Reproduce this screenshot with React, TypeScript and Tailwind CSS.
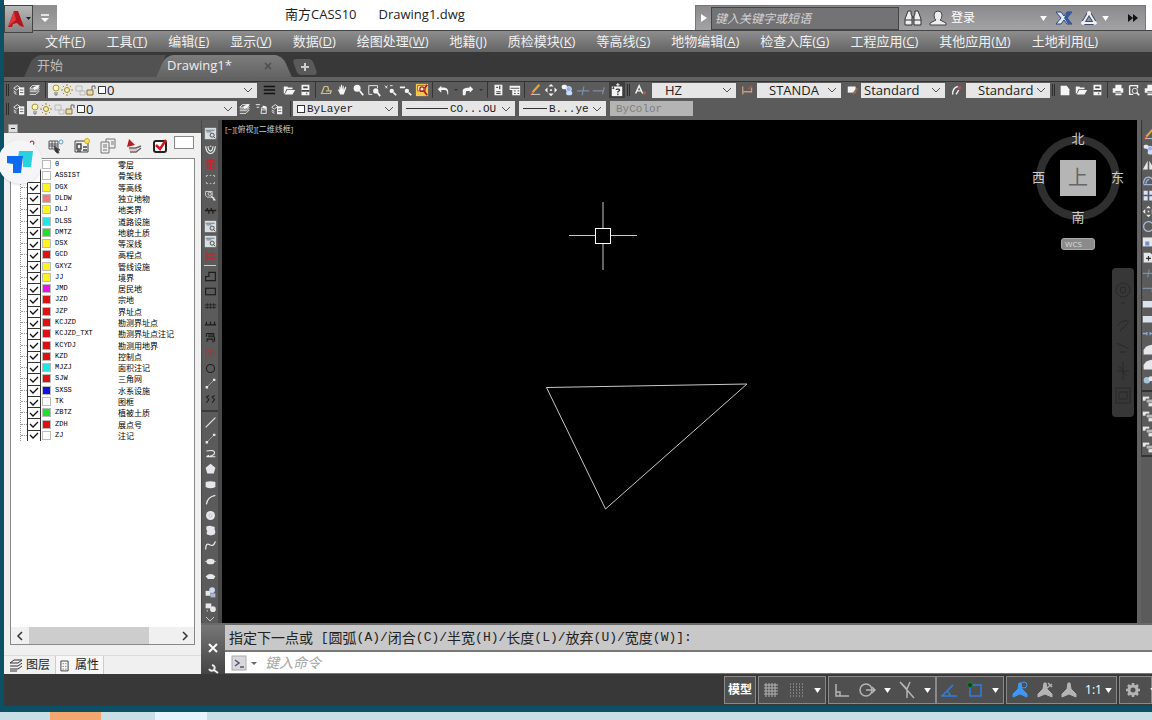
import React, { useState } from 'react'

const f = { fill: 'currentColor', stroke: 'none' }

/* 16x16 tool glyphs */
const glyphs: Record<string, React.ReactNode> = {
  layerProps: <><path d="M2 6l4-3 3 2-4 3zM2 9l3 2M2 11l3 2" /><rect x="8" y="5" width="6" height="9" {...f} /><path d="M9 8h4M9 11h4" stroke="#555" /></>,
  layerStack: <><path d="M5 3h8l-3 3H2zM2 8l8 0 3-3M2 10h8l3-3M2 13h7l4-4" /><path d="M6 5l6-3v4l-5 2z" {...f} /></>,
  layerIso: <><path d="M2 3h5M3 6h3M9 6h5v7H8zM9 9h5" /><path d="M10 4l4 1v3l-4-1z" {...f} /></>,
  lines: <path d="M2 4h13M2 8h13M2 12h13" stroke="#111" strokeWidth="1.5" />,
  folder: <><path d="M2 4h4l1 1h5v2H5l-2 5H2z" {...f} /><path d="M6 8h9l-3 5H3z" {...f} /></>,
  save: <><path d="M4 2h9v12H4z" {...f} /><path d="M6 5h5M4 9h9" stroke="#444" strokeWidth="2" /><path d="M10 11v2" stroke="#444" /></>,
  sheet: <path d="M6 4h4l1 4M3 12l3-8M2 12h11l1-3H8" stroke="#cfc08a" strokeWidth="1.4" />,
  hand: <path d="M3 7l2 1V4h1v3l1-5h1v5l1-4h1v5l2-4 1 1-3 8H6z" {...f} />,
  zoom: <><circle cx="7" cy="6" r="4" {...f} /><path d="M10 9l4 5" strokeWidth="2" /></>,
  zoomWin: <><path d="M2 3h10v3M2 3v10h4" /><circle cx="10" cy="9" r="3" {...f} /><path d="M12 11l3 4" strokeWidth="2" /></>,
  zoomPrev: <><path d="M2 3l3 3M5 3L3 6M8 3h3" /><circle cx="10" cy="9" r="2.5" {...f} /><path d="M12 11l3 3" strokeWidth="2" /></>,
  zoomOut: <><path d="M1 5h6" strokeWidth="2" /><circle cx="9" cy="9" r="2.5" {...f} /><path d="M11 11l3 3" strokeWidth="2" /></>,
  inspect: <><rect x="1" y="1" width="14" height="14" fill="#f0c850" stroke="none" /><path d="M3 3h9v6H3z" fill="#fff3c4" stroke="#c9402c" /><circle cx="8" cy="7" r="2.5" stroke="#b1201c" strokeWidth="1.5" /><path d="M10 9l4 5M14 2l-3 4" stroke="#b1201c" strokeWidth="2" /></>,
  undo: <path d="M6 3L2 7l4 4V8h4q3 0 3 5h1q1-8-5-8H6z" {...f} />,
  redo: <path d="M10 3l4 4-4 4V9H6l-1 5H2V8q1-3 8-3z" {...f} />,
  calc: <><path d="M4 2h9v12H4z" {...f} /><path d="M6 5h2M10 3v4M6 10h5M6 12h5" stroke="#444" strokeWidth="1.4" /></>,
  table: <><path d="M3 3h12v11H6V8H3z" {...f} /><path d="M4 6h10M8 9h2M12 9h2M8 12h2M12 12h2" stroke="#444" /></>,
  pencil: <><path d="M3 13h11" stroke="#ddd" /><path d="M4 12l9-10" stroke="#dfa94a" strokeWidth="2.4" /><path d="M2 13l3-3" stroke="#b1403c" strokeWidth="2" /></>,
  move: <><path d="M8 1l3 3H5zM8 15l3-3H5zM1 8l3-3v6zM15 8l-3-3v6z" {...f} /><path d="M7 8h2" strokeWidth="2" /></>,
  copy: <><rect x="2" y="2" width="6" height="5" rx="2" {...f} /><circle cx="10" cy="7" r="3" fill="#8fb4ea" stroke="#dfe9ff" /><rect x="7" y="9" width="7" height="5" rx="2" fill="#c9dcfa" stroke="none" /></>,
  trim: <path d="M1 9h14M9 4L7 14" stroke="#7e8fa3" strokeWidth="1.4" />,
  extend: <path d="M1 9h12M14 5l-2 8" stroke="#7e8fa3" strokeWidth="1.4" />,
  help: <><path d="M2 4h12v11H2z" {...f} /><path d="M9 0v4M7 2h4" stroke="#fff" /><path d="M4 4v3M2 6h3" stroke="#444" /><path d="M7 8q0-1 2-1t2 1-2 2v1M9 12v2" stroke="#333" strokeWidth="1.4" /></>,
  textA: <><path d="M3 12L7 3l4 9M5 9h5" strokeWidth="1.6" /><path d="M11 10l2 4 2-4" fill="#b0694c" stroke="none" /></>,
  dim: <><path d="M2 4v9M2 10h10M12 5v6" stroke="#c69a82" strokeWidth="1.5" /><path d="M8 7l5-4" stroke="#a05c40" strokeWidth="2" /></>,
  tableStyle: <><path d="M2 4h9v7H2z" {...f} /><path d="M8 13l5-7" stroke="#9a6a4c" strokeWidth="2.4" /></>,
  leader: <><path d="M3 13q0-8 6-9M7 13l3-5" strokeWidth="1.6" /><circle cx="11" cy="5" r="2" fill="#a55" stroke="none" /></>,
  newDoc: <path d="M3 3h7l3 4v7H3z" {...f} />,
  printer: <><path d="M5 2h7v4H5zM2 6h12v5H2zM5 12h7v2H5z" {...f} /><path d="M5 10h6" stroke="#444" /></>,
  preview: <><path d="M3 3h9v3M3 3v10h4" strokeWidth="1.6" /><circle cx="9" cy="9" r="3" /><path d="M11 11l3 3" strokeWidth="2" /></>,
  viewBox: <><rect x="1" y="1" width="14" height="14" fill="#d8dde0" stroke="none" /><path d="M2 4h11M3 6h6" stroke="#567" /><circle cx="10" cy="10" r="2.5" stroke="#333" /><path d="M12 12l2 2" stroke="#333" /></>,
  tulip: <path d="M2 4q1 9 6 9t6-9M5 4q0 5 3 6 3-1 3-6M7 4h2" strokeWidth="1.5" />,
  redMark: <path d="M4 3h8v9H4zM8 1v13M3 7h10" stroke="#d81f26" strokeWidth="1.6" />,
  dashes: <path d="M3 5V3h2M11 3h2v2M3 11v2h2M11 13h2v-2M7 3h2M7 13h2" stroke="#ccc" />,
  search2: <><path d="M2 3h8v7H4L2 8z" /><circle cx="7" cy="6" r="2" /><path d="M9 9l5 5M12 10v4" strokeWidth="1.5" /></>,
  fence: <path d="M1 8h14M4 5v2M9 5v2M6 9v3M11 9v3" stroke="#1d1d1d" strokeWidth="1.6" />,
  redGrid: <path d="M4 2v12M9 3v11M2 5h12M2 10h12" stroke="#d81f26" strokeWidth="1.2" />,
  steps: <path d="M2 13V8h4V3h8v10z" stroke="#1d1d1d" strokeWidth="1.4" />,
  rect: <rect x="2" y="4" width="12" height="8" stroke="#1d1d1d" strokeWidth="1.4" />,
  rails: <path d="M1 6h14M1 9h14M4 4v3M8 4v3M12 4v3M4 8v3M8 8v3M12 8v3" stroke="#1d1d1d" />,
  comb: <path d="M1 11h14M3 7v4M8 7v4M13 7v4" stroke="#1d1d1d" strokeWidth="1.5" />,
  horse: <path d="M3 3h9v4H5M3 3v4M3 10h8v4M13 7v6M5 5h6M3 13l2-2" stroke="#1d1d1d" strokeWidth="1.3" />,
  redTwo: <path d="M4 3v10M4 4h3v8M9 3v10M9 3h3v9M4 8h8" stroke="#d81f26" strokeWidth="1.1" />,
  ring: <circle cx="8" cy="8" r="5" stroke="#1d1d1d" strokeWidth="1.3" />,
  twoPts: <><path d="M4 12l8-8" stroke="#aaa" /><path d="M2 11h3v3H2zM11 2h3v3h-3z" {...f} /></>,
  ss: <path d="M6 3L3 5l3 3-3 4M13 3l-3 2 3 3-3 4" stroke="#1d1d1d" strokeWidth="1.3" />,
  line: <path d="M2 14L14 2" strokeWidth="1.5" />,
  pline: <path d="M3 5q10-2 10 2t-10 5h11M3 12l3-2" strokeWidth="1.4" />,
  pentagon: <path d="M8 2l6 5-2 7H4L2 7z" {...f} />,
  box: <path d="M2 5q6-2 12 0v6q-6 3-12 0z" {...f} />,
  arc: <path d="M3 14Q4 5 14 3" strokeWidth="1.5" />,
  disc: <><circle cx="8" cy="8" r="5.5" {...f} /><circle cx="8" cy="8" r="2" stroke="#bbb" /></>,
  cloud: <path d="M3 3q4-2 8 0 3 0 2 3 2 4 0 7-5 2-9 0-2-2 0-4-2-3-1-6z" {...f} />,
  spline: <path d="M2 13Q2 4 7 7t7-4" strokeWidth="1.6" />,
  ellipse: <><path d="M1 8h14" stroke="#a9b8d8" /><ellipse cx="8" cy="8" rx="5" ry="3.5" {...f} /></>,
  ellArc: <path d="M2 8q6-6 12 0l-2 3H5z" {...f} />,
  block: <><path d="M2 6h6v6H2z" {...f} /><circle cx="10" cy="5" r="3.5" fill="#cfd9f2" stroke="none" /><path d="M8 9h6v5H8z" fill="#a9b8d8" stroke="none" /></>,
  makeBlock: <><path d="M2 3h7v6H2z" {...f} /><circle cx="11" cy="10" r="3.5" {...f} /><path d="M4 11v2" /></>,
  mirror: <path d="M7 2v11H1zM9 2v11h6z" {...f} />,
  offset: <path d="M2 12q0-8 6-8t6 8M5 12q0-5 4-5M2 13h12" stroke="#9fb3d8" strokeWidth="1.6" />,
  array: <path d="M2 2h5v5H2zM9 2h5v5H9zM2 9h5v5H2zM9 9h5v5H9z" fill="#d6e3fb" stroke="none" />,
  rotate: <circle cx="8" cy="8" r="6" stroke="#a9bedd" strokeWidth="1.5" />,
  scale: <><path d="M1 3h14v11H1z" {...f} /><path d="M4 8h5v5H4z" fill="#6e93cf" stroke="none" /></>,
  stretch: <><path d="M2 2h8l4 4v8H2z" {...f} /><path d="M5 9h6M8 6v6" stroke="#333" strokeWidth="1.5" /></>,
  breakPt: <path d="M1 5h14v8H1zM3 2v3" fill="#dbe2ee" stroke="none" />,
  join: <path d="M1 8h5M10 8h5M6 6v4M10 6v4" stroke="#8ea9da" strokeWidth="1.6" />,
  fillet: <path d="M2 14V9q2-6 10-7h3v12z" {...f} />,
  explode: <><circle cx="6" cy="9" r="4" fill="#a7c4d8" stroke="none" /><circle cx="11" cy="7" r="3" fill="#dcebf4" stroke="none" /></>,
  order: <><path d="M1 2h8v5H1z" {...f} /><path d="M5 5h8v5H5z" fill="#b6b6b6" stroke="#444" /><path d="M8 10h7v4H8z" {...f} /></>,
}

const Ico = ({ g, className = 'size-[14px]' }: { g: string; className?: string }) => (
  <svg viewBox="0 0 16 16" fill="none" stroke="currentColor" className={`${className} shrink-0`} aria-hidden="true">
    {glyphs[g]}
  </svg>
)

const Tool = ({ g }: { g: string }) => (
  <button type="button" aria-label={g} className="flex h-4 w-4 shrink-0 items-center justify-center text-gray-100">
    <Ico g={g} />
  </button>
)

const Tools = ({ list }: { list: string[] }) => (
  <div className="flex shrink-0">
    {list.map((g, i) => <Tool key={i} g={g} />)}
  </div>
)

const Sep = () => <span className="mx-[2px] h-4 w-px shrink-0 bg-[#353535]" />

const Grip = () => <span className="mx-[2px] h-3 w-[3px] shrink-0 border-x border-[#2e2e2e]" />

const Chevron = () => (
  <svg viewBox="0 0 10 10" className="mr-1 size-[10px] shrink-0" fill="none" stroke="#555" aria-hidden="true">
    <path d="M1 3l4 4 4-4" />
  </svg>
)

const Dot = () => (
  <svg viewBox="0 0 9 16" className="w-[9px] shrink-0" aria-hidden="true"><path d="M3 7h4L5 9z" fill="#333" /></svg>
)

const Combo = ({ label, value, width, children, text = 'text-[13px]' }: {
  label: string; value: string; width: string; children?: React.ReactNode; text?: string
}) => (
  <div className={`${width} flex h-[15px] shrink-0 items-center bg-[#e6e6e6] text-[#222]`}>
    {children}
    <select aria-label={label} className={`${text} h-full min-w-0 flex-1 appearance-none bg-transparent leading-[14px] outline-none`}>
      <option>{value}</option>
    </select>
    <Chevron />
  </div>
)

const LayerState = () => (
  <svg viewBox="0 0 56 14" className="ml-[3px] h-[14px] w-[56px] shrink-0" fill="none" aria-hidden="true">
    <circle cx="5" cy="5" r="3" fill="#fbf6b8" stroke="#a59b3a" /><path d="M4 9v3h2V9" stroke="#777" />
    <circle cx="16" cy="7" r="2.5" fill="#f7efb0" stroke="#a08c26" /><path d="M16 1v2M16 11v2M10 7h2M20 7h2M12 3l1 1M20 3l-1 1M12 11l1-1M20 11l-1-1" stroke="#a08c26" />
    <path d="M25 3h6v5h-6zM29 8h5v4h-5z" stroke="#bbb" />
    <path d="M36 7h6v5h-6z" fill="#e8dcae" stroke="#8a7340" /><path d="M41 7V3h3v3" stroke="#666" />
    <path d="M47.500 3.500h7v7h-7z" fill="#fff" stroke="#333" />
  </svg>
)

const menus = [
  ['文件', 'F'], ['工具', 'T'], ['编辑', 'E'], ['显示', 'V'], ['数据', 'D'], ['绘图处理', 'W'], ['地籍', 'J'],
  ['质检模块', 'K'], ['等高线', 'S'], ['地物编辑', 'A'], ['检查入库', 'G'], ['工程应用', 'C'], ['其他应用', 'M'], ['土地利用', 'L'],
]

const layers: [string, string, string][] = [
  ['0', '零层', '#ffffff'], ['ASSIST', '骨架线', '#ffffff'], ['DGX', '等高线', '#fdf51d'], ['DLDW', '独立地物', '#ec7c7c'],
  ['DLJ', '地类界', '#fdf51d'], ['DLSS', '道路设施', '#21e6e6'], ['DMTZ', '地貌土质', '#1fe02a'], ['DSX', '等深线', '#fdf51d'],
  ['GCD', '高程点', '#dd1111'], ['GXYZ', '管线设施', '#fdf51d'], ['JJ', '境界', '#fdf51d'], ['JMD', '居民地', '#e815e8'],
  ['JZD', '宗地', '#dd1111'], ['JZP', '界址点', '#dd1111'], ['KCJZD', '勘测界址点', '#dd1111'], ['KCJZD_TXT', '勘测界址点注记', '#dd1111'],
  ['KCYDJ', '勘测用地界', '#dd1111'], ['KZD', '控制点', '#dd1111'], ['MJZJ', '面积注记', '#21e6e6'], ['SJW', '三角网', '#dd1111'],
  ['SXSS', '水系设施', '#1212d8'], ['TK', '图框', '#ffffff'], ['ZBTZ', '植被土质', '#1fe02a'], ['ZDH', '展点号', '#dd1111'], ['ZJ', '注记', '#ffffff'],
]

const options = [['圆弧', 'A'], ['闭合', 'C'], ['半宽', 'H'], ['长度', 'L'], ['放弃', 'U'], ['宽度', 'W']]

const leftTop = ['viewBox', 'tulip', 'redMark', 'dashes', 'search2', 'fence', 'viewBox', 'viewBox', 'redGrid']
const leftMid = ['steps', 'rect', 'rails', 'comb', 'horse', 'redTwo', 'ring', 'twoPts', 'ss']
const leftLow = ['line', 'twoPts', 'pline', 'pentagon', 'box', 'arc', 'disc', 'cloud', 'spline', 'ellipse', 'ellArc', 'block', 'makeBlock']
const rightTop = ['pencil', 'copy', 'mirror', 'offset', 'array', 'move', 'rotate', 'scale', 'stretch', 'trim', 'extend', 'breakPt', 'breakPt', 'join', 'fillet', 'fillet', 'explode']

const TitleBar = () => (
  <header className="flex h-[30px] shrink-0 items-end bg-white">
    <div className="z-10 flex h-[25px] items-start">
      <button type="button" aria-label="应用程序菜单" className="flex h-[28px] w-[29px] items-center justify-center border border-[#444] bg-linear-to-b from-[#b8b8b8] to-[#858585]">
        <svg viewBox="0 0 26 24" className="h-6 w-[26px]" aria-hidden="true">
          <path d="M2 20L8 4h4l6 16-4-1-3-3-4 1-1 3z" fill="#b3161c" />
          <path d="M8 4l2 9-4 3-4 4z" fill="#e2383d" />
          <path d="M20 10h5l-2.500 3z" fill="#222" />
        </svg>
      </button>
      <button type="button" aria-label="快速访问" className="flex h-[25px] w-[24px] items-center justify-center bg-linear-to-b from-[#8c8c8c] to-[#a2a2a2]">
        <svg viewBox="0 0 10 8" className="h-2 w-[10px]" aria-hidden="true"><path d="M1 1h8" stroke="#fff" strokeWidth="1.5" /><path d="M1 4h8L5 8z" fill="#fff" /></svg>
      </button>
    </div>
    <h1 className="ml-[228px] flex h-[30px] flex-1 items-center gap-[22px] text-[13px] text-[#222]">
      <span>南方CASS10</span>
      <span>Drawing1.dwg</span>
    </h1>
    <div className="mr-[6px] flex h-[25px] w-[451px] items-center border border-b-0 border-[#777] bg-linear-to-b from-[#8b8b8e] to-[#a3a3a6] text-white">
      <button type="button" aria-label="展开" className="flex w-[15px] justify-center">
        <svg viewBox="0 0 6 8" className="h-2 w-[6px]" aria-hidden="true"><path d="M0 0l6 4-6 4z" fill="#fff" /></svg>
      </button>
      <input aria-label="搜索" placeholder="键入关键字或短语" className="h-[23px] w-[188px] border border-[#444] bg-[#737376] px-[3px] text-[12px] italic outline-none placeholder:text-[#d5d5d5]" />
      <button type="button" aria-label="查找" className="ml-[5px]">
        <svg viewBox="0 0 18 18" className="size-[18px]" fill="#eee" stroke="#333" aria-hidden="true">
          <path d="M4 2h3v3l1 2v9H1v-6zM14 2h-3v3l-1 2v9h7v-6z" /><path d="M1 11h7M10 11h7M8 8h2" />
        </svg>
      </button>
      <button type="button" className="ml-[7px] flex items-center gap-[4px] text-[12px]">
        <svg viewBox="0 0 18 18" className="size-[18px]" fill="#eee" stroke="#444" aria-hidden="true">
          <path d="M9 2q4 0 4 4t-2 5l6 3v2H1v-2l6-3Q5 10 5 6t4-4z" />
        </svg>
        登录
      </button>
      <span className="flex-1" />
      <Down />
      <svg viewBox="0 0 18 16" className="ml-2 h-4 w-[18px]" aria-label="Exchange">
        <path d="M1 2h5l3 4 3-4h5l-5 6 5 6h-5l-3-4-3 4H1l5-6z" fill="#e3e8f2" stroke="#2b477e" /><path d="M12 2h5l-5 6 5 6h-4l-4-6z" fill="#3558a0" />
      </svg>
      <svg viewBox="0 0 18 16" className="mr-1 ml-[7px] h-4 w-[18px]" fill="none" aria-label="A360">
        <path d="M9 3L3 13h12z" stroke="#3a4b70" strokeWidth="4" strokeLinejoin="round" /><path d="M9 3L3 13h12z" stroke="#f2f2f2" strokeWidth="2" />
        <g fill="#f2f2f2"><circle cx="9" cy="3" r="2" /><circle cx="3" cy="13" r="2" /><circle cx="15" cy="13" r="2" /></g>
      </svg>
      <Down />
      <svg viewBox="0 0 10 8" className="mr-[7px] ml-[19px] h-2 w-[10px]" fill="#111" aria-hidden="true"><path d="M0 0l5 4-5 4zM5 0l5 4-5 4z" /></svg>
    </div>
  </header>
)

const Down = () => (
  <svg viewBox="0 0 8 6" className="h-[5px] w-[7px] shrink-0" aria-hidden="true"><path d="M0 0h8L4 6z" fill="#fff" /></svg>
)

const Tabs = () => (
  <div className="flex h-[29px] shrink-0 items-start border-b-4 border-[#626262] bg-[#383838] pt-[3px] pl-[25px] text-[13px]">
    <button type="button" className="relative flex h-[22px] w-[132px] items-center pl-[8px] text-[#bdbdbd]">
      <span className="absolute inset-0 -skew-x-[24deg] rounded-tl-lg bg-[#525252]" />
      <span className="relative">开始</span>
    </button>
    <div className="relative flex h-[22px] w-[126px] items-center justify-between pr-[15px] pl-[6px] text-[#eee]">
      <span className="absolute inset-y-0 right-4 left-0 -skew-x-[24deg] rounded-tl-lg bg-linear-to-b from-[#7d7d7d] to-[#646464]" />
      <span className="absolute inset-y-0 right-0 left-8 skew-x-[24deg] rounded-tr-lg bg-linear-to-b from-[#7d7d7d] to-[#646464]" />
      <a href="#drawing" className="relative">Drawing1*</a>
      <button type="button" aria-label="关闭" className="relative">
        <svg viewBox="0 0 8 8" className="size-2" stroke="#4c4c4c" strokeWidth="1.5" aria-hidden="true"><path d="M1 1l6 6M7 1L1 7" /></svg>
      </button>
    </div>
    <button type="button" aria-label="新图形" className="relative mt-[4px] ml-[8px] flex h-[16px] w-[20px] items-center justify-center">
      <span className="absolute inset-0 skew-x-[20deg] rounded bg-[#5a5a5a]" />
      <svg viewBox="0 0 10 10" className="relative size-[10px]" stroke="#ccc" strokeWidth="2" aria-hidden="true"><path d="M5 1v8M1 5h8" /></svg>
    </button>
  </div>
)

const Toolbars = () => (
  <div className="flex h-[39px] shrink-0 flex-col justify-between overflow-hidden bg-[#5b5b5b] pb-[3px]">
    <div className="flex h-[17px] items-center border-t border-[#333]">
      <Grip />
      <Tools list={['layerProps', 'layerStack']} />
      <Sep />
      <Combo label="图层" value="0" width="w-[209px]"><LayerState /></Combo>
      <span className="w-1 shrink-0" />
      <Tools list={['lines']} />
      <span className="w-1 shrink-0" />
      <Tools list={['folder', 'save']} />
      <Sep />
      <Tools list={['sheet', 'hand', 'zoom', 'zoomWin', 'zoomPrev', 'zoomOut', 'inspect']} />
      <Sep />
      <Tool g="undo" />
      <Dot />
      <Tool g="redo" />
      <Dot />
      <Sep />
      <Tools list={['calc', 'table']} />
      <Sep />
      <Tools list={['pencil', 'move', 'copy', 'trim', 'extend']} />
      <span className="ml-[2px] shrink-0 bg-[#3e3e3e]"><Tool g="help" /></span>
      <Grip />
      <Tools list={['textA']} />
      <span className="w-1 shrink-0" />
      <Combo label="文字样式" value="HZ" width="w-[84px] pl-[13px]" />
      <span className="w-1 shrink-0" />
      <Tools list={['dim']} />
      <span className="w-px shrink-0" />
      <Combo label="标注样式" value="STANDA" width="w-[84px] pl-[12px]" />
      <span className="w-1 shrink-0" />
      <Tools list={['tableStyle']} />
      <Combo label="表格样式" value="Standard" width="w-[84px] pl-[3px]" />
      <span className="w-1 shrink-0" />
      <Tools list={['leader']} />
      <span className="w-px shrink-0" />
      <Combo label="引线样式" value="Standard" width="w-[84px] pl-[12px]" />
      <Grip />
      <Tools list={['newDoc', 'folder', 'save']} />
      <Sep />
      <Tools list={['printer', 'preview', 'printer']} />
    </div>
    <div className="flex h-[17px] items-center">
      <Grip />
      <Tools list={['layerProps']} />
      <Combo label="当前图层" value="0" width="w-[210px]"><LayerState /></Combo>
      <Tools list={['layerStack', 'layerIso', 'layerProps']} />
      <span className="w-[3px] shrink-0" />
      <Sep />
      <div className="flex gap-1 font-['Liberation_Mono','Noto_Sans_CJK_SC',monospace]">
        <Combo label="颜色" value="ByLayer" width="w-[105px]" text="text-[11px]">
          <span className="mr-[2px] ml-1 size-2 border border-[#333] bg-white" />
        </Combo>
        <Combo label="线型" value="CO...OU" width="w-[113px]" text="text-[11px]">
          <span className="mr-[2px] ml-1 h-px w-[42px] bg-[#333]" />
        </Combo>
        <Combo label="线宽" value="B...ye" width="w-[87px]" text="text-[11px]">
          <span className="mr-[2px] ml-1 h-px w-[24px] bg-[#333]" />
        </Combo>
        <div className="flex h-[15px] w-[83px] items-center bg-[#b4b4b4]">
          <select aria-label="打印样式" disabled className="w-full appearance-none bg-transparent pl-[6px] text-[11px] leading-[14px] text-[#808080]">
            <option>ByColor</option>
          </select>
        </div>
      </div>
    </div>
  </div>
)

const LayerPanel = () => {
  const [on, setOn] = useState(layers.map((_, i) => i > 1))

  return (
    <aside className="relative flex w-[197px] shrink-0 flex-col bg-[#f0f0f0]">
      <div className="flex h-[13px] items-end bg-[#5b5b5b] pl-[4px]">
        <button type="button" aria-label="折叠" className="flex h-[9px] w-[10px] items-center justify-center border border-[#999] bg-[#ddd]">
          <span className="h-px w-1 bg-[#333]" />
        </button>
      </div>

      <div className="flex h-[25px] items-center gap-[10px] pr-[7px] pl-[18px]">
        <svg viewBox="0 0 16 16" className="size-4" fill="none" stroke="#7a1f1f" aria-hidden="true"><circle cx="10" cy="5" r="2" /><path d="M5 14q1-6 5-6t5 6" /></svg>
        <svg viewBox="0 0 16 16" className="size-4" fill="none" stroke="#555" aria-hidden="true"><path d="M1 3h9v8H1zM1 6h9M1 8h9M4 3v8M7 3v8" /><path d="M6 8l6 4-2 0 1 3-2 0-2-2z" fill="#334" /><circle cx="13" cy="4" r="2" fill="#e6f2fa" stroke="#5da0cf" /></svg>
        <svg viewBox="0 0 16 16" className="size-4" fill="none" stroke="#444" aria-hidden="true"><path d="M1 3h13v11H1z" /><path d="M3 6h4v5H3zM9 9h4M9 12h4M3 13h4" strokeWidth="1.500" /><circle cx="13" cy="3" r="2.500" fill="#f8e45a" stroke="#c9a92a" /></svg>
        <svg viewBox="0 0 16 16" className="size-4" fill="#eee" stroke="#777" aria-hidden="true"><path d="M6 1h9v9H6z" /><path d="M1 4h8v11H1zM3 7h4M3 9h4M3 12h4M11 4h3M11 6h3" /></svg>
        <svg viewBox="0 0 16 16" className="size-4" fill="none" aria-hidden="true"><path d="M3 1l6 6-8 2z" fill="#b71c22" /><path d="M3 10h7l5-2M4 14h6l5-4" stroke="#666" strokeWidth="1.500" /><path d="M3 12h8" stroke="#d99" /></svg>
        <svg viewBox="0 0 16 16" className="size-4" fill="none" aria-hidden="true"><rect x="2" y="3" width="12" height="11" rx="2" fill="#fff" stroke="#222" strokeWidth="2" /><path d="M4 7l4 4 6-9" stroke="#cf1820" strokeWidth="2.500" /></svg>
        <input aria-label="过滤" className="mb-[6px] -ml-[4px] h-[13px] min-w-0 flex-1 border border-[#888] bg-white" />
      </div>

      <div className="mx-[6px] flex min-h-0 flex-1 flex-col border border-[#888] bg-white">
        <ul className="ml-[9px] grid h-[282px] auto-rows-fr border-l border-dotted border-[#999] text-[8px] leading-[11px] text-black">
          {layers.map(([code, name, color], i) => (
            <li key={code} className="flex min-h-0 items-center">
              <span className="w-[6px] border-t border-dotted border-[#999]" />
              <label className="flex h-full items-center">
                <input
                  type="checkbox"
                  checked={on[i]}
                  onChange={() => setOn(on.map((v, n) => (n === i ? !v : v)))}
                  className="peer h-full w-[14px] appearance-none border-x border-t border-[#333] bg-white"
                />
                <svg viewBox="0 0 10 8" className="-ml-[12px] hidden h-2 w-[10px] peer-checked:block" fill="none" stroke="#111" strokeWidth="1.300" aria-hidden="true">
                  <path d="M1 4l3 3 5-5" />
                </svg>
                <span className="ml-[3px] size-[9px] border border-[#bbb] p-px peer-not-checked:ml-px" style={{ backgroundColor: color }} />
                <span className="ml-[4px] w-[63px] font-['Liberation_Mono',monospace] text-[7px]">{code}</span>
                <span className="whitespace-nowrap">{name}</span>
              </label>
            </li>
          ))}
        </ul>
        <div className="mt-auto flex h-[17px] items-center justify-between bg-[#f0f0f0] px-[5px]">
          <svg viewBox="0 0 8 10" className="h-[10px] w-2" fill="none" stroke="#333" strokeWidth="1.500" aria-hidden="true"><path d="M6 1L2 5l4 4" /></svg>
          <span className="mr-auto ml-[5px] h-full w-[120px] bg-[#cdcdcd]" />
          <svg viewBox="0 0 8 10" className="h-[10px] w-2" fill="none" stroke="#333" strokeWidth="1.500" aria-hidden="true"><path d="M2 1l4 4-4 4" /></svg>
        </div>
      </div>

      <div className="mt-[10px] flex h-[19px] items-center border-t border-[#ddd] pl-[5px] text-[12px] text-[#222]">
        <button type="button" className="flex h-full items-center gap-[3px] pr-[5px]">
          <svg viewBox="0 0 14 14" className="size-[14px]" fill="none" stroke="#333" aria-hidden="true"><path d="M5 2h8l-4 3H1zM1 8h8l4-3M1 11h8l4-3M1 13h7" /></svg>
          图层
        </button>
        <button type="button" className="flex h-full items-center gap-[6px] border-x border-[#ccc] bg-[#f7f7f7] px-[4px]">
          <svg viewBox="0 0 10 14" className="h-[13px] w-[9px]" fill="none" stroke="#333" aria-hidden="true"><path d="M1 2h8v11H1zM3 5h1M6 5h1M3 8h1M6 8h1M3 11h1M6 11h1" /></svg>
          属性
        </button>
      </div>

      {/* floating assistant badge */}
      <div className="absolute top-[20px] -left-[6px] z-10 flex size-[44px] items-center justify-center rounded-full bg-[#f5f5f7] shadow">
        <svg viewBox="0 0 28 24" className="h-6 w-7" aria-hidden="true">
          <path d="M13 1h14l-2 16h-8V8h-5z" fill="#27d3dc" /><path d="M1 6h16l-2 17H7v-9L1 13z" fill="#0d6bf0" />
        </svg>
      </div>
    </aside>
  )
}

const Stack = ({ list }: { list: string[] }) => (
  <>
    {list.map((g, i) => (
      <button key={i} type="button" aria-label={g} className="flex min-h-0 flex-1 items-center justify-center text-gray-200">
        <Ico g={g} className="size-[13px]" />
      </button>
    ))}
  </>
)

const Canvas = () => (
  <section id="drawing" className="relative min-w-0 flex-1 overflow-hidden bg-black text-[#ccc]">
    <p className="absolute top-[3px] left-[3px] text-[8px] leading-[12px]">[−][俯视][二维线框]</p>
    <svg className="absolute inset-0 size-full" fill="none" stroke="#c8c8c8" aria-hidden="true">
      <path d="M324.500 267.500L525 264 383.500 389z" />
      <path d="M347 115.500h26M389 115.500h26M381 82v26M381 124v26" />
      <rect x="373.500" y="108.500" width="15" height="15" stroke="#fff" />
    </svg>

    <div className="absolute top-3 right-[13px] flex w-[92px] flex-col items-center">
      <div className="relative grid size-[92px] grid-cols-3 grid-rows-3 place-items-center text-[13px] leading-none">
        <svg viewBox="0 0 92 92" className="absolute inset-0 size-full" fill="none" aria-hidden="true">
          <circle cx="46" cy="46" r="38" stroke="#2f2f2f" strokeWidth="8" />
        </svg>
        <span className="relative col-start-2 row-start-1 self-start">北</span>
        <span className="relative col-start-1 row-start-2 justify-self-start">西</span>
        <button type="button" aria-label="视图" className="relative col-start-2 row-start-2 flex size-9 items-center justify-center bg-[#b5b5b5] text-[20px] text-[#666]">上</button>
        <span className="relative col-start-3 row-start-2 justify-self-end">东</span>
        <span className="relative col-start-2 row-start-3 self-end">南</span>
      </div>
      <button type="button" className="mt-[14px] flex h-3 w-[34px] items-center rounded-[3px] border border-[#aaa] bg-[#8b8b8b] pl-[3px] text-[8px] text-[#ddd]">WCS</button>
    </div>

    <nav aria-label="导航" className="absolute top-[148px] right-[3px] h-[149px] w-[22px] rounded bg-[#373737]">
      <svg viewBox="0 0 22 149" className="size-full" fill="none" stroke="#282828" aria-hidden="true">
        <circle cx="11" cy="22" r="7" /><circle cx="11" cy="22" r="3" /><path d="M9 35h4M5 58q6-8 12-4M8 63l8-8M5 75l12 6M8 84h6M11 94v18M5 103h12M7 98l8 10" />
        <rect x="4" y="120" width="14" height="15" /><path d="M7 124h8v7H7z" />
      </svg>
    </nav>
  </section>
)

const CommandLine = () => (
  <div className="flex h-[51px] shrink-0 border-t-2 border-[#6a6a6a]">
    <div className="flex w-6 flex-col items-center justify-between bg-linear-to-b from-[#777] to-[#444] pt-[18px]">
      <button type="button" aria-label="关闭命令行">
        <svg viewBox="0 0 10 10" className="size-[10px]" stroke="#fff" strokeWidth="2" aria-hidden="true"><path d="M1 1l8 8M9 1L1 9" /></svg>
      </button>
      <button type="button" aria-label="自定义">
        <svg viewBox="0 0 12 10" className="h-[10px] w-3" fill="none" stroke="#eee" strokeWidth="2" aria-hidden="true"><path d="M5 1q4 1 2 5-3 2-5-1M7 6l4 3" /></svg>
      </button>
    </div>
    <div className="flex min-w-0 flex-1 flex-col">
      <p className="flex h-[27px] items-center border-b-2 border-[#777] bg-[#c8c8c8] pl-1 text-[14px] whitespace-pre text-[#222]">
        <span>指定下一点或</span>
        <span className="font-['Liberation_Mono',monospace] text-[13px]"> [</span>
        {options.map(([name, key], i) => (
          <React.Fragment key={key}>
            <span>{name}</span>
            <span className="font-['Liberation_Mono',monospace] text-[13px]">({key}){i < options.length - 1 ? '/' : ']:'}</span>
          </React.Fragment>
        ))}
      </p>
      <div className="flex flex-1 items-center border-b border-[#777] bg-white pl-[6px]">
        <svg viewBox="0 0 26 16" className="h-4 w-[26px]" fill="none" aria-hidden="true">
          <rect x="1" y="1" width="14" height="14" fill="#d8d8de" stroke="#aaa" /><path d="M4 5l4 3-4 3M9 12h4" stroke="#556" strokeWidth="1.500" /><path d="M20 7h6l-3 3z" fill="#666" />
        </svg>
        <input aria-label="命令" placeholder="键入命令" className="ml-[8px] h-5 flex-1 text-[14px] italic outline-none placeholder:text-[#a5a5a5]" />
      </div>
    </div>
  </div>
)

const Group = ({ children, className }: { children: React.ReactNode; className: string }) => (
  <div className={`${className} flex h-[28px] shrink-0 items-center border border-[#8a8a8a] bg-[#4f4f4f]`}>{children}</div>
)

const StatusIcon = ({ label, children, tone = 'text-[#b4b4b4]' }: { label: string; children: React.ReactNode; tone?: string }) => (
  <button type="button" aria-label={label} className={`${tone} shrink-0`}>
    <svg viewBox="0 0 18 18" className="size-[18px]" fill="none" stroke="currentColor" aria-hidden="true">{children}</svg>
  </button>
)

const person = <path d="M8 2h2l1 6 5 5v3l-7-3-7 3v-3l5-5z" fill="currentColor" />

const StatusBar = () => (
  <footer className="flex h-[32px] shrink-0 items-center justify-end gap-[2px] overflow-hidden bg-[#383838]">
    <Group className="w-[32px] justify-center">
      <button type="button" className="text-[12px] font-bold whitespace-nowrap text-white">模型</button>
    </Group>
    <Group className="w-[68px] justify-between pr-[4px] pl-[3px]">
      <StatusIcon label="栅格"><path d="M4 2v14M7 2v14M10 2v14M13 2v14M2 4h14M2 7h14M2 10h14M2 13h14" /></StatusIcon>
      <StatusIcon label="捕捉"><path d="M2 3h15M2 6h15M2 9h15M2 12h15M2 15h15" strokeDasharray="1 2" /></StatusIcon>
      <Down />
    </Group>
    <div className="flex">
      <Group className="w-[108px] justify-between pr-[4px] pl-[3px]">
        <StatusIcon label="正交"><path d="M4 3v12h13M4 11h4v4" strokeWidth="1.5" /></StatusIcon>
        <StatusIcon label="极轴"><circle cx="8" cy="9" r="6" strokeWidth="1.5" /><path d="M8 9h9M14 6l3 3-3 3" strokeWidth="1.5" /></StatusIcon>
        <Down />
        <StatusIcon label="等轴测"><path d="M2 1l14 16M9 8v9M9 8L2 1M12 1L9 8" strokeWidth="1.5" /></StatusIcon>
        <Down />
      </Group>
      <Group className="w-[68px] justify-between pr-[4px] pl-[3px]">
        <StatusIcon label="追踪" tone="text-[#2f7fe0]"><path d="M1 15h16M2 15L13 4M7 10q3 2 3 5" strokeWidth="1.5" /></StatusIcon>
        <StatusIcon label="对象捕捉" tone="text-[#2f7fe0]"><path d="M4 4h11v11H4z" strokeWidth="1.5" /><circle cx="4" cy="4" r="2.500" stroke="#0d8a33" fill="#143d20" /></StatusIcon>
        <Down />
      </Group>
    </div>
    <Group className="w-[111px] justify-between px-[4px]">
      <StatusIcon label="注释可见" tone="text-[#3d97f5]">{person}<circle cx="13" cy="4" r="3" /></StatusIcon>
      <StatusIcon label="自动缩放">{person}<path d="M11 7l5-4M12 2l4 4" strokeWidth="1.500" /></StatusIcon>
      <StatusIcon label="注释比例">{person}</StatusIcon>
      <button type="button" className="flex items-center gap-[3px] text-[12px] text-white">1:1 <Down /></button>
    </Group>
    <Group className="w-[33px] gap-[8px] pl-[4px]">
      <StatusIcon label="设置"><circle cx="9" cy="9" r="4" strokeWidth="3" /><path d="M9 2v3M9 13v3M2 9h3M13 9h3M4 4l2 2M12 12l2 2M14 4l-2 2M4 14l2-2" strokeWidth="2.500" /></StatusIcon>
      <Down />
    </Group>
  </footer>
)

export default function App() {
  return (
    <div className="flex h-screen flex-col overflow-hidden bg-[#0b5064] pl-1 font-['Open_Sans','Noto_Sans_CJK_SC',sans-serif]">
      <TitleBar />
      <nav className="flex h-[22px] shrink-0 items-center gap-[21px] overflow-hidden border-t border-[#444] bg-linear-to-b from-[#8e8e8e] to-[#646464] pl-[41px] text-[13px] whitespace-nowrap text-[#f0f0f0]">
        {menus.map(([name, key]) => (
          <a key={key} href={`#${key}`}>{name}(<u>{key}</u>)</a>
        ))}
      </nav>
      <Tabs />
      <Toolbars />

      <main className="flex min-h-0 flex-1">
        <LayerPanel />
        <div className="flex min-w-0 flex-1 flex-col">
          <div className="flex min-h-0 flex-1">
            <div className="flex w-[21px] shrink-0 flex-col border-r-4 border-l border-[#484848] bg-[#5b5b5b] pt-[6px]">
              <Stack list={leftTop} />
              <span className="mx-[2px] mb-[3px] h-px bg-[#ccc]" />
              <Stack list={leftMid} />
              <span className="my-[3px] h-[2px] bg-[#3a3a3a]" />
              <Stack list={leftLow} />
              <svg viewBox="0 0 10 6" className="mx-auto h-2 w-[10px]" fill="none" stroke="#ccc" aria-hidden="true"><path d="M1 1l4 4 4-4" /></svg>
            </div>
            <Canvas />
            <div className="w-[15px] shrink-0 overflow-hidden border-l-4 border-[#626262] bg-[#5b5b5b]">
              <div className="flex h-[337px] flex-col items-start border-b-2 border-l border-[#333] pt-[7px]">
                <Stack list={rightTop} />
                <span className="my-[2px] h-[2px] w-full bg-[#333]" />
                <Stack list={['order', 'order', 'order', 'order']} />
              </div>
            </div>
          </div>
          <CommandLine />
        </div>
      </main>

      <StatusBar />
      <div className="h-[6px] shrink-0" />
      <div className="-ml-1 flex h-2 shrink-0 bg-[#c9dfe6]">
        <span className="ml-[50px] w-[51px] bg-[#f3a76f]" />
        <span className="ml-[54px] w-[52px] bg-[#e6f4fb]" />
      </div>
    </div>
  )
}
